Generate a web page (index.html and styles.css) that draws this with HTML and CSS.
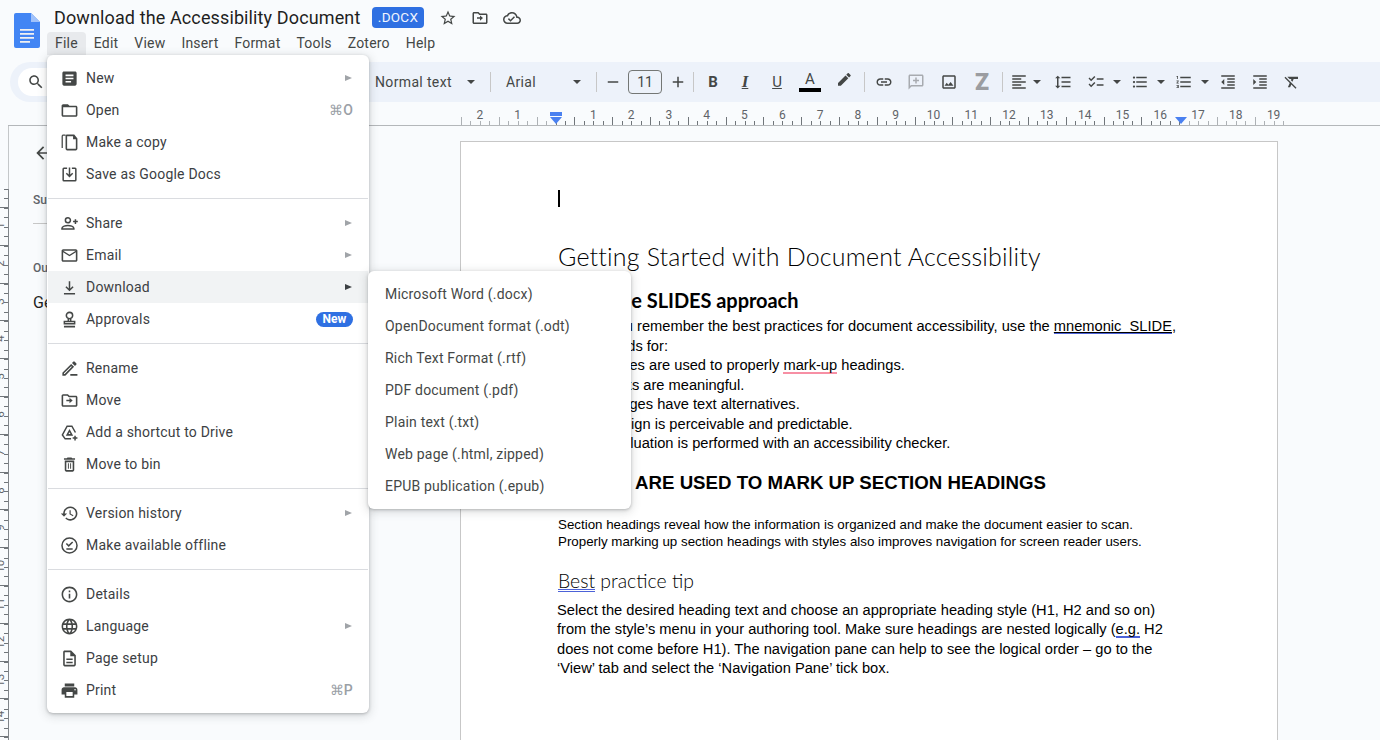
FILE: index.html
```html
<!DOCTYPE html>
<html lang="en">
<head>
    <meta charset="UTF-8">
    <title>Download the Accessibility Document</title>
    <link rel="stylesheet" href="styles.css">
</head>
<body>
    <header class="top-bar">
        <svg class="docs-logo" viewBox="0 0 26 35">
            <path fill="#4285f4" d="M2 0h15l9 9v24a2 2 0 0 1-2 2H2a2 2 0 0 1-2-2V2a2 2 0 0 1 2-2z"/>
            <path fill="#a1c2fa" d="M17 0l9 9h-9z"/>
            <path fill="#f1f1f1" d="M6 16h14v1.700H6zM6 20h14v1.700H6zM6 24h14v1.700H6zM6 28h10v1.700H6z"/>
        </svg>
        <div class="top-main">
            <div class="title-row">
                <span class="doc-title">Download the Accessibility Document</span>
                <span class="doc-badge">.DOCX</span>
                <svg class="title-icon star" viewBox="0 0 24 24"><path d="M22 9.240l-7.190-.62L12 2 9.190 8.630 2 9.240l5.460 4.730L5.820 21 12 17.270 18.180 21l-1.630-7.030L22 9.240zM12 15.400l-3.760 2.270 1-4.280-3.320-2.880 4.380-.38L12 6.100l1.710 4.040 4.380.38-3.320 2.880 1 4.280L12 15.400z"/></svg>
                <svg class="title-icon" viewBox="0 0 24 24"><path d="M20 6h-8l-2-2H4c-1.100 0-1.990.9-1.990 2L2 18c0 1.100.9 2 2 2h16c1.100 0 2-.9 2-2V8c0-1.100-.9-2-2-2zm0 12H4V6h5.170l2 2H20v10zm-8-5H8v-2h4V8.500l4 3.500-4 3.500z"/></svg>
                <svg class="title-icon" viewBox="0 0 24 24"><path d="M19.350 10.040C18.670 6.590 15.640 4 12 4 9.110 4 6.600 5.640 5.350 8.040 2.340 8.360 0 10.910 0 14c0 3.310 2.690 6 6 6h13c2.760 0 5-2.240 5-5 0-2.640-2.050-4.780-4.650-4.960zM19 18H6c-2.210 0-4-1.790-4-4 0-2.050 1.530-3.760 3.560-3.970l1.070-.11.5-.95C8.080 7.140 9.940 6 12 6c2.620 0 4.880 1.860 5.390 4.430l.3 1.500 1.530.11c1.560.1 2.780 1.410 2.780 2.960 0 1.650-1.350 3-3 3zm-9-3.820l-2.090-2.090L6.500 13.500 10 17l6-6-1.410-1.410z"/></svg>
            </div>
            <nav class="menu-bar">
                <span class="menu-item active">File</span>
                <span class="menu-item">Edit</span>
                <span class="menu-item">View</span>
                <span class="menu-item">Insert</span>
                <span class="menu-item">Format</span>
                <span class="menu-item">Tools</span>
                <span class="menu-item">Zotero</span>
                <span class="menu-item">Help</span>
            </nav>
        </div>
    </header>

    <div class="toolbar">
        <div class="search-pill">
            <svg class="tb-icon" viewBox="0 0 24 24"><path d="M15.500 14h-.79l-.28-.27C15.410 12.590 16 11.110 16 9.500 16 5.910 13.090 3 9.500 3S3 5.910 3 9.500 5.910 16 9.500 16c1.610 0 3.090-.59 4.230-1.570l.27.28v.79l5 4.990L20.490 19l-4.990-5zm-6 0C7.010 14 5 11.990 5 9.500S7.010 5 9.500 5 14 7.010 14 9.500 11.990 14 9.500 14z"/></svg>
        </div>
        <div class="select style-select"><span>Normal text</span><i class="caret"></i></div>
        <span class="tb-sep sep-select"></span>
        <div class="select font-select"><span>Arial</span><i class="caret"></i></div>
        <span class="tb-sep sep-select"></span>
        <div class="tool narrow"><svg class="tb-icon" viewBox="0 0 24 24"><path d="M5 11h14v2H5z"/></svg></div>
        <div class="size-box">11</div>
        <div class="tool narrow"><svg class="tb-icon" viewBox="0 0 24 24"><path d="M19 13h-6v6h-2v-6H5v-2h6V5h2v6h6z"/></svg></div>
        <span class="tb-sep"></span>
        <div class="tool first-after-sep fmt fmt-b">B</div>
        <div class="tool fmt fmt-i">I</div>
        <div class="tool fmt fmt-u">U</div>
        <div class="tool fmt fmt-a gap-1">A<i class="color-bar"></i></div>
        <div class="tool gap-2"><svg class="tb-icon" viewBox="0 0 24 24"><path d="M17.750 7 14 3.250l-10 10V17h3.750l10-10zm2.960-2.960c.39-.39.39-1.020 0-1.410L18.370.29c-.39-.39-1.020-.39-1.410 0L15 2.250 18.750 6l1.960-1.960z"/></svg></div>
        <span class="tb-sep sep-pen"></span>
        <div class="tool first-after-sep"><svg class="tb-icon" viewBox="0 0 24 24"><path d="M3.900 12c0-1.710 1.390-3.100 3.100-3.100h4V7H7c-2.760 0-5 2.240-5 5s2.240 5 5 5h4v-1.900H7c-1.710 0-3.100-1.390-3.100-3.100zM8 13h8v-2H8v2zm9-6h-4v1.900h4c1.710 0 3.100 1.390 3.100 3.100s-1.390 3.100-3.100 3.100h-4V17h4c2.760 0 5-2.240 5-5s-2.240-5-5-5z"/></svg></div>
        <div class="tool"><svg class="tb-icon muted" viewBox="0 0 24 24"><path d="M20 2H4c-1.100 0-2 .9-2 2v18l4-4h14c1.100 0 2-.9 2-2V4c0-1.100-.9-2-2-2zm0 14H5.170L4 17.170V4h16v12zm-9-2h2v-3h3V9h-3V6h-2v3H8v2h3z"/></svg></div>
        <div class="tool gap-1"><svg class="tb-icon" viewBox="0 0 24 24"><path d="M19 5v14H5V5h14m0-2H5c-1.100 0-2 .9-2 2v14c0 1.100.9 2 2 2h14c1.100 0 2-.9 2-2V5c0-1.100-.9-2-2-2zm-4.860 8.860l-3 3.870L9 13.140 6 17h12l-3.860-5.140z"/></svg></div>
        <div class="tool gap-1 fmt fmt-z">Z</div>
        <span class="tb-sep sep-z"></span>
        <div class="combo tight"><svg class="tb-icon" viewBox="0 0 24 24"><path d="M15 15H3v2h12v-2zm0-8H3v2h12V7zM3 13h18v-2H3v2zm0 8h18v-2H3v2zM3 3v2h18V3H3z"/></svg><i class="caret"></i></div>
        <div class="tool"><svg class="tb-icon" viewBox="0 0 24 24"><path d="M6 7h2.500L5 3.500 1.500 7H4v10H1.500L5 20.500 8.500 17H6V7zm4-2v2h12V5H10zm0 14h12v-2H10v2zm0-6h12v-2H10v2z"/></svg></div>
        <div class="combo gap-1"><svg class="tb-icon" viewBox="0 0 24 24"><path d="M22 7h-9v2h9V7zm0 8h-9v2h9v-2zM5.540 11 2 7.460l1.410-1.410 2.120 2.120 4.240-4.240 1.410 1.410L5.540 11zm0 8L2 15.460l1.410-1.410 2.120 2.120 4.240-4.240 1.410 1.410L5.540 19z"/></svg><i class="caret"></i></div>
        <div class="combo"><svg class="tb-icon" viewBox="0 0 24 24"><path d="M4 10.500c-.83 0-1.500.67-1.500 1.500s.67 1.500 1.500 1.500 1.500-.67 1.500-1.500-.67-1.500-1.500-1.500zm0-6c-.83 0-1.500.67-1.500 1.500S3.170 7.500 4 7.500 5.500 6.830 5.500 6 4.830 4.500 4 4.500zm0 12c-.83 0-1.500.68-1.500 1.500s.68 1.500 1.500 1.500 1.500-.68 1.500-1.500-.67-1.500-1.500-1.500zM7 19h14v-2H7v2zm0-6h14v-2H7v2zm0-8v2h14V5H7z"/></svg><i class="caret"></i></div>
        <div class="combo"><svg class="tb-icon" viewBox="0 0 24 24"><path d="M2 17h2v.5H3v1h1v.5H2v1h3v-4H2v1zm1-9h1V4H2v1h1v3zm-1 3h1.800L2 13.100v.9h3v-1H3.200L5 10.900V10H2v1zm5-6v2h14V5H7zm0 14h14v-2H7v2zm0-6h14v-2H7v2z"/></svg><i class="caret"></i></div>
        <div class="tool"><svg class="tb-icon" viewBox="0 0 24 24"><path d="M11 17h10v-2H11v2zm-8-5l4 4V8l-4 4zm0 9h18v-2H3v2zM3 3v2h18V3H3zm8 6h10V7H11v2zm0 4h10v-2H11v2z"/></svg></div>
        <div class="tool"><svg class="tb-icon" viewBox="0 0 24 24"><path d="M3 21h18v-2H3v2zM3 8v8l4-4-4-4zm8 9h10v-2H11v2zM3 3v2h18V3H3zm8 6h10V7H11v2zm0 4h10v-2H11v2z"/></svg></div>
        <div class="tool"><svg class="tb-icon" viewBox="0 0 24 24"><path d="M3.270 5L2 6.270l6.970 6.970L6.500 19h3l1.570-3.660L16.730 21 18 19.730 3.550 5.270 3.270 5zM6 5v.18L8.820 8h2.400l-.72 1.680 2.100 2.100L14.210 8H20V5H6z"/></svg></div>
    </div>

    <div class="ruler">
        <div class="ruler-scale">
            <span>2</span><span>1</span><span></span><span>1</span><span>2</span><span>3</span><span>4</span><span>5</span><span>6</span><span>7</span><span>8</span><span>9</span><span>10</span><span>11</span><span>12</span><span>13</span><span>14</span><span>15</span><span>16</span><span>17</span><span>18</span><span>19</span>
            <i class="shade shade-left"></i>
            <i class="shade shade-right"></i>
            <i class="indent-bar"></i>
            <i class="marker marker-left"></i>
            <i class="marker marker-right"></i>
        </div>
    </div>

    <main class="workspace">
        <div class="v-ruler">
            <div class="v-scale">
                <span>1</span><span>2</span><span>3</span><span>4</span><span>5</span><span>6</span><span>7</span><span>8</span><span>9</span><span>10</span><span>11</span><span>12</span><span>13</span><span>14</span>
            </div>
        </div>
        <aside class="outline-pane">
            <svg class="back-arrow" viewBox="0 0 24 24"><path d="M20 11H7.830l5.590-5.590L12 4l-8 8 8 8 1.410-1.410L7.830 13H20v-2z"/></svg>
            <div class="pane-label">Summary</div>
            <div class="pane-rule"></div>
            <div class="pane-label outline-label">Outline</div>
            <div class="pane-entry">Getting Started with Document Accessibility</div>
        </aside>
        <article class="page">
            <div class="cursor"></div>
            <h1 class="doc-h1">Getting Started with Document Accessibility</h1>
            <h2 class="doc-h2">Using the SLIDES approach</h2>
            <p class="doc-p">To help you remember the best practices for document accessibility, use the <span class="spell-blue linked">mnemonic&nbsp; SLIDE</span>,</p>
            <p class="doc-p">which stands for:</p>
            <p class="doc-p slide-line">Styles are used to properly <span class="spell-red">mark-up</span> headings.</p>
            <p class="doc-p slide-line">Links are meaningful.</p>
            <p class="doc-p slide-line">Images have text alternatives.</p>
            <p class="doc-p slide-line">Design is perceivable and predictable.</p>
            <p class="doc-p slide-line">Evaluation is performed with an accessibility checker.</p>
            <h3 class="doc-h3">STYLES ARE USED TO MARK UP SECTION HEADINGS</h3>
            <p class="doc-small">Section headings reveal how the information is organized and make the document easier to scan.</p>
            <p class="doc-small">Properly marking up section headings with styles also improves navigation for screen reader users.</p>
            <h4 class="doc-h4"><span class="double-blue">Best</span> practice tip</h4>
            <p class="doc-p tip">Select the desired heading text and choose an appropriate heading style (H1, H2 and so on)</p>
            <p class="doc-p tip">from the style’s menu in your authoring tool. Make sure headings are nested logically (<span class="spell-blue">e.g.</span> H2</p>
            <p class="doc-p tip">does not come before H1). The navigation pane can help to see the logical order – go to the</p>
            <p class="doc-p tip">‘View’ tab and select the ‘Navigation Pane’ tick box.</p>
        </article>
    </main>

    <!-- File menu -->
    <div class="file-menu">
        <div class="row"><svg class="row-icon" viewBox="0 0 24 24"><path d="M19 3H5c-1.100 0-2 .9-2 2v14c0 1.100.9 2 2 2h14c1.100 0 2-.9 2-2V5c0-1.100-.9-2-2-2zm-5 14H7v-2h7v2zm3-4H7v-2h10v2zm0-4H7V7h10v2z"/></svg><span class="row-text">New</span><i class="arrow"></i></div>
        <div class="row"><svg class="row-icon" viewBox="0 0 24 24"><path d="M20 6h-8l-2-2H4c-1.100 0-1.990.9-1.990 2L2 18c0 1.100.9 2 2 2h16c1.100 0 2-.9 2-2V8c0-1.100-.9-2-2-2zm0 12H4V8h16v10z"/></svg><span class="row-text">Open</span><span class="shortcut">⌘O</span></div>
        <div class="row"><svg class="row-icon" viewBox="0 0 24 24"><path d="M16 1H4c-.6 0-2 .9-2 2v15h1.600V3c0-.2.2-.4.4-.4h3V1zM18 1H9c-1.100 0-2 .9-2 2v16c0 1.100.9 2 2 2h11c1.100 0 2-.9 2-2V6l-4-5zm2 18H9V3h7.500v4H20v12z" transform="translate(0 1)"/></svg><span class="row-text">Make a copy</span></div>
        <div class="row"><svg class="row-icon stroke" viewBox="0 0 24 24"><path d="M9 4H5a1 1 0 0 0-1 1v14a1 1 0 0 0 1 1h14a1 1 0 0 0 1-1V5a1 1 0 0 0-1-1h-4M12 3v11M8 10.500l4 4 4-4"/></svg><span class="row-text">Save as Google Docs</span></div>
        <div class="divider"></div>
        <div class="row"><svg class="row-icon stroke" viewBox="0 0 24 24"><circle cx="10" cy="8" r="3.200"/><path d="M2.500 19v-1c0-2.400 4.600-3.600 7.500-3.600s7.500 1.200 7.500 3.600v1zM19.500 6.500v6M16.500 9.500h6"/></svg><span class="row-text">Share</span><i class="arrow"></i></div>
        <div class="row"><svg class="row-icon" viewBox="0 0 24 24"><path d="M20 4H4c-1.100 0-1.990.9-1.990 2L2 18c0 1.100.9 2 2 2h16c1.100 0 2-.9 2-2V6c0-1.100-.9-2-2-2zm0 14H4V8l8 5 8-5v10zm-8-7L4 6h16l-8 5z"/></svg><span class="row-text">Email</span><i class="arrow"></i></div>
        <div class="row hovered"><svg class="row-icon stroke" viewBox="0 0 24 24"><path d="M12 4v11M7.500 11l4.500 4.500 4.500-4.500M5 20h14"/></svg><span class="row-text">Download</span><i class="arrow dark"></i></div>
        <div class="row"><svg class="row-icon stroke" viewBox="0 0 24 24"><circle cx="12" cy="7" r="4"/><path d="M10.500 11v3M13.500 11v3M5.500 14.500h13v3h-13zM5 21h14"/></svg><span class="row-text">Approvals</span><span class="new-badge">New</span></div>
        <div class="divider"></div>
        <div class="row"><svg class="row-icon" viewBox="0 0 24 24"><path d="M14.060 9.020l.92.92L5.920 19H5v-.92l9.060-9.060M17.660 3c-.25 0-.51.1-.7.29l-1.830 1.830 3.750 3.750 1.830-1.830c.39-.39.39-1.020 0-1.410l-2.340-2.340c-.2-.2-.45-.29-.71-.29zm-3.600 3.190L3 17.250V21h3.750L17.810 9.940l-3.750-3.750zM13 19h9v2h-9z"/></svg><span class="row-text">Rename</span></div>
        <div class="row"><svg class="row-icon" viewBox="0 0 24 24"><path d="M20 6h-8l-2-2H4c-1.100 0-1.990.9-1.990 2L2 18c0 1.100.9 2 2 2h16c1.100 0 2-.9 2-2V8c0-1.100-.9-2-2-2zm0 12H4V6h5.170l2 2H20v10zm-8-5H8v-2h4V8.500l4 3.500-4 3.500z"/></svg><span class="row-text">Move</span></div>
        <div class="row"><svg class="row-icon stroke" viewBox="0 0 24 24"><path d="M14 20H6.500L3 15 9 4h6l4.500 8M9 15h6l-3-5.500zM19 16v6M16 19h6"/></svg><span class="row-text">Add a shortcut to Drive</span></div>
        <div class="row"><svg class="row-icon" viewBox="0 0 24 24"><path d="M6 19c0 1.100.9 2 2 2h8c1.100 0 2-.9 2-2V7H6v12zM8 9h8v10H8V9zm2 1.500h1.200v7H10zm2.800 0H14v7h-1.200zM15.500 4l-1-1h-5l-1 1H5v2h14V4h-3.500z"/></svg><span class="row-text">Move to bin</span></div>
        <div class="divider"></div>
        <div class="row"><svg class="row-icon" viewBox="0 0 24 24"><path d="M13 3c-4.970 0-9 4.030-9 9H1l3.890 3.890.07.14L9 12H6c0-3.870 3.130-7 7-7s7 3.130 7 7-3.130 7-7 7c-1.930 0-3.680-.79-4.940-2.060l-1.420 1.420C8.270 19.990 10.510 21 13 21c4.970 0 9-4.030 9-9s-4.030-9-9-9zm-1 5v5l4.280 2.540.72-1.210-3.500-2.080V8H12z"/></svg><span class="row-text">Version history</span><i class="arrow"></i></div>
        <div class="row"><svg class="row-icon stroke" viewBox="0 0 24 24"><circle cx="12" cy="12" r="9.500"/><path d="M8 9.500l3 3 5-5M8 16.500h8"/></svg><span class="row-text">Make available offline</span></div>
        <div class="divider"></div>
        <div class="row"><svg class="row-icon" viewBox="0 0 24 24"><path d="M11 7h2v2h-2zm0 4h2v6h-2zm1-9C6.480 2 2 6.480 2 12s4.480 10 10 10 10-4.480 10-10S17.520 2 12 2zm0 18c-4.410 0-8-3.590-8-8s3.590-8 8-8 8 3.590 8 8-3.590 8-8 8z"/></svg><span class="row-text">Details</span></div>
        <div class="row"><svg class="row-icon" viewBox="0 0 24 24"><path d="M11.990 2C6.470 2 2 6.480 2 12s4.470 10 9.990 10C17.520 22 22 17.520 22 12S17.520 2 11.990 2zm6.930 6h-2.950c-.32-1.250-.78-2.450-1.380-3.560 1.840.63 3.370 1.910 4.330 3.560zM12 4.040c.83 1.200 1.480 2.530 1.910 3.960h-3.820c.43-1.430 1.080-2.760 1.910-3.960zM4.260 14C4.100 13.360 4 12.690 4 12s.1-1.360.26-2h3.380c-.08.66-.14 1.320-.14 2 0 .68.06 1.340.14 2H4.260zm.82 2h2.950c.32 1.250.78 2.450 1.380 3.560-1.840-.63-3.370-1.900-4.330-3.560zm2.950-8H5.080c.96-1.660 2.490-2.930 4.330-3.560C8.810 5.550 8.350 6.750 8.030 8zM12 19.960c-.83-1.200-1.480-2.530-1.910-3.960h3.820c-.43 1.430-1.080 2.760-1.910 3.960zM14.340 14H9.660c-.09-.66-.16-1.320-.16-2 0-.68.07-1.350.16-2h4.680c.09.65.16 1.320.16 2 0 .68-.07 1.340-.16 2zm.25 5.560c.6-1.110 1.060-2.310 1.380-3.560h2.950c-.96 1.650-2.490 2.930-4.330 3.560zM16.360 14c.08-.66.14-1.320.14-2 0-.68-.06-1.340-.14-2h3.380c.16.64.26 1.310.26 2s-.1 1.360-.26 2h-3.380z"/></svg><span class="row-text">Language</span><i class="arrow"></i></div>
        <div class="row"><svg class="row-icon" viewBox="0 0 24 24"><path d="M8 16h8v2H8zm0-4h8v2H8zm6-10H6c-1.100 0-2 .9-2 2v16c0 1.100.89 2 1.990 2H18c1.100 0 2-.9 2-2V8l-6-6zm4 18H6V4h7v5h5v11z"/></svg><span class="row-text">Page setup</span></div>
        <div class="row"><svg class="row-icon" viewBox="0 0 24 24"><path d="M19 8H5c-1.660 0-3 1.340-3 3v6h4v4h12v-4h4v-6c0-1.660-1.340-3-3-3zm-3 11H8v-5h8v5zm3-7c-.55 0-1-.45-1-1s.45-1 1-1 1 .45 1 1-.45 1-1 1zm-1-9H6v4h12V3z"/></svg><span class="row-text">Print</span><span class="shortcut">⌘P</span></div>
    </div>

    <!-- Download submenu -->
    <div class="sub-menu">
        <div class="sub-row">Microsoft Word (.docx)</div>
        <div class="sub-row">OpenDocument format (.odt)</div>
        <div class="sub-row">Rich Text Format (.rtf)</div>
        <div class="sub-row">PDF document (.pdf)</div>
        <div class="sub-row">Plain text (.txt)</div>
        <div class="sub-row">Web page (.html, zipped)</div>
        <div class="sub-row">EPUB publication (.epub)</div>
    </div>
</body>
</html>
```

FILE: styles.css
```css
* {
    margin: 0;
    padding: 0;
    box-sizing: border-box;
}

html, body {
    height: 740px;
    overflow: hidden;
}

body {
    position: relative;
    background: #f9fbfd;
    color: #444746;
    font-family: Roboto, 'Noto Sans', sans-serif;
    font-size: 14px;
}

/* top bar */
.top-bar {
    display: flex;
    height: 62px;
}

.docs-logo {
    width: 26px;
    height: 35px;
    margin: 13px 0 0 14px;
    flex: none;
}

.top-main {
    margin-left: 7px;
}

.title-row {
    display: flex;
    align-items: center;
    height: 25px;
    margin-top: 7px;
    padding: 0 0 4px 7px;
}

.doc-title {
    font-size: 18px;
    letter-spacing: 0.12px;
    color: #1f1f1f;
    width: 318px;
    white-space: nowrap;
}

.doc-badge {
    width: 52px;
    height: 21px;
    background: #2f70e2;
    color: #f1f5fe;
    border-radius: 4px;
    font-size: 13.5px;
    line-height: 21px;
    text-align: center;
    letter-spacing: 0.3px;
}

.title-icon {
    width: 18px;
    height: 18px;
    margin-left: 14px;
    fill: #444746;
}

.title-icon.star {
    margin-left: 15px;
}

.menu-bar {
    display: flex;
    height: 23px;
}

.menu-item {
    padding: 0 8px;
    line-height: 23px;
    border-radius: 4px 4px 0 0;
    letter-spacing: 0.2px;
}

.menu-item.active {
    background: #e8eaed;
}

/* toolbar */
.toolbar {
    display: flex;
    align-items: center;
    height: 40px;
    margin-left: 10px;
    width: 1400px;
    background: #edf2fa;
    border-radius: 20px;
    color: #444746;
}

.search-pill {
    display: flex;
    align-items: center;
    width: 320px;
    height: 28px;
    margin-left: 8px;
    padding-left: 9px;
    background: #fff;
    border-radius: 14px;
    flex: none;
}

.tb-icon {
    width: 18px;
    height: 18px;
    fill: #444746;
    flex: none;
}

.tb-icon.muted {
    fill: #a8abb0;
}

.select {
    display: flex;
    align-items: center;
    justify-content: space-between;
    letter-spacing: 0.35px;
    flex: none;
}

.style-select {
    width: 100px;
    margin-left: 37px;
}

.font-select {
    width: 75px;
    margin-left: 15px;
}

.caret {
    width: 0;
    height: 0;
    flex: none;
    border-left: 4px solid transparent;
    border-right: 4px solid transparent;
    border-top: 4px solid #444746;
}

.tb-sep {
    width: 1px;
    height: 20px;
    background: #c7c7c7;
    flex: none;
}

.sep-select {
    margin-left: 15px;
}

.sep-pen {
    margin-left: 4px;
}

.sep-z {
    margin-left: 4px;
}

.tool {
    display: flex;
    align-items: center;
    justify-content: center;
    position: relative;
    width: 32px;
    height: 28px;
    flex: none;
}

.tool.narrow {
    width: 31px;
}

.gap-1 {
    margin-left: 1px;
}

.gap-2 {
    margin-left: 2px;
}

.first-after-sep {
    margin-left: 3px;
}

.size-box {
    width: 34px;
    height: 24px;
    border: 1px solid #747775;
    border-radius: 4px;
    text-align: center;
    line-height: 22px;
    flex: none;
}

.fmt {
    font-size: 15px;
}

.fmt-b {
    font-weight: 700;
}

.fmt-i {
    font-family: 'Liberation Serif', serif;
    font-style: italic;
    font-weight: 700;
    font-size: 17px;
    text-decoration: underline;
}

.fmt-u {
    text-decoration: underline;
}

.fmt-a {
    align-items: flex-start;
    line-height: 22px;
}

.color-bar {
    position: absolute;
    left: 5px;
    bottom: 4px;
    width: 22px;
    height: 4px;
    background: #000;
}

.fmt-z {
    font-size: 23px;
    font-weight: 900;
    color: #9b9da1;
}

.combo {
    display: flex;
    align-items: center;
    width: 44px;
    padding-left: 7px;
    flex: none;
}

.combo .caret {
    margin-left: 8px;
}

.combo.tight .caret {
    margin-left: 5px;
}

/* ruler */
.ruler {
    height: 24px;
    padding-left: 452px;
    margin-left: 8px;
    border-bottom: 1px solid #b4b7ba;
}

.ruler-scale {
    display: flex;
    position: relative;
    width: 832px;
    height: 23px;
    padding-top: 5px;
    font-size: 12px;
    color: #5f6368;
    background:
        repeating-linear-gradient(to right, #70757a 0 1px, transparent 1px 37.8px) 1px 100% / 100% 8px no-repeat,
        repeating-linear-gradient(to right, #70757a 0 1px, transparent 1px 9.45px) 1px 100% / 100% 4px no-repeat;
}

.ruler-scale span {
    width: 37.8px;
    text-align: center;
    line-height: 16px;
    flex: none;
    position: relative;
    left: 1px;
    z-index: 2;
}

.shade {
    position: absolute;
    top: 0;
    bottom: 0;
    background: rgba(249, 251, 253, 0.45);
}

.shade-left {
    left: 0;
    width: 96px;
}

.shade-right {
    left: 721px;
    right: 0;
}

.marker {
    position: absolute;
    top: 15px;
    border-left: 6px solid transparent;
    border-right: 6px solid transparent;
    border-top: 7px solid #4a80f0;
    z-index: 3;
}

.marker-left {
    left: 90px;
}

.marker-right {
    left: 715px;
}

.indent-bar {
    position: absolute;
    left: 90px;
    top: 10px;
    width: 12px;
    height: 4px;
    background: #4a80f0;
    z-index: 3;
}

/* work area */
.workspace {
    display: flex;
    height: 614px;
    overflow: hidden;
}

.v-ruler {
    width: 9px;
    height: 100%;
    overflow: hidden;
    flex: none;
    background:
        linear-gradient(to bottom, #c4c7c9 0 63px, #80858a 63px) 8px 0 / 1px 100% no-repeat,
        repeating-linear-gradient(to bottom, #70757a 0 1px, transparent 1px 37.8px) 0 81px / 8px 100% no-repeat,
        repeating-linear-gradient(to bottom, #70757a 0 1px, transparent 1px 9.45px) 4px 63px / 4px 100% no-repeat;
}

.v-scale {
    margin-top: 81px;
    margin-left: -6px;
    font-size: 11.5px;
    color: #5f6368;
}

.v-scale span {
    display: flex;
    align-items: center;
    justify-content: center;
    height: 37.8px;
    width: 12px;
    writing-mode: vertical-rl;
    transform: rotate(180deg);
}

.outline-pane {
    width: 451px;
    flex: none;
    padding: 15px 0 0 24px;
    font-size: 12px;
}

.back-arrow {
    display: block;
    width: 20px;
    height: 24px;
    fill: #444746;
}

.pane-label {
    margin-top: 27px;
    font-weight: 500;
    color: #5f6368;
    line-height: 16px;
}

.pane-rule {
    height: 1px;
    margin-top: 15px;
    width: 300px;
    background: #c7c7c7;
}

.outline-label {
    margin-top: 36px;
}

.pane-entry {
    margin-top: 18px;
    font-size: 16px;
    line-height: 18px;
    color: #1f1f1f;
    white-space: nowrap;
}

/* the page */
.page {
    width: 818px;
    height: 640px;
    margin-top: 15px;
    padding: 48px 0 0 96px;
    background: #fff;
    border: 1px solid #c7c7c7;
    color: #000;
    font-family: 'Liberation Sans', Arial, sans-serif;
    flex: none;
}

.cursor {
    width: 2px;
    height: 17px;
    margin-left: 1px;
    background: #000;
}

.doc-h1 {
    margin: 33px 0 0 1px;
    font-family: Lato, sans-serif;
    font-weight: 300;
    font-size: 25px;
    letter-spacing: 0.18px;
    line-height: 32px;
    white-space: nowrap;
}

.doc-h2 {
    margin: 15px 0 4px 1px;
    font-family: Lato, sans-serif;
    font-weight: 700;
    font-size: 20px;
    letter-spacing: -0.05px;
    line-height: 26px;
    white-space: nowrap;
}

.doc-p {
    font-size: 14.67px;
    line-height: 19.5px;
    margin-left: 1px;
    white-space: nowrap;
}

.slide-line {
    padding-left: 47px;
}

.spell-blue {
    border-bottom: 1px solid #4c62d8;
    box-shadow: 0 1px 0 #4c62d8;
    line-height: 14px;
    display: inline-block;
}

.spell-blue.linked {
    text-decoration: underline;
    box-shadow: none;
}

.spell-red {
    border-bottom: 2px solid #f78fa4;
    display: inline-block;
    line-height: 14px;
}

.doc-h3 {
    margin: 17px 0 0 1px;
    font-size: 18.67px;
    font-weight: 700;
    line-height: 24px;
    white-space: nowrap;
}

.doc-small {
    font-size: 13.33px;
    line-height: 17px;
    margin-left: 1px;
    white-space: nowrap;
}

.doc-h3 + .doc-small {
    margin-top: 21px;
}

.doc-h4 {
    margin: 19px 0 0 1px;
    font-family: Lato, sans-serif;
    font-weight: 300;
    font-size: 19.4px;
    line-height: 24px;
    white-space: nowrap;
}

.double-blue {
    border-bottom: 3px double #4c62d8;
    display: inline-block;
    line-height: 16px;
}

.doc-p.tip {
    margin-left: 0;
}

.doc-h4 + .doc-p.tip {
    margin-top: 8px;
}

/* menus */
.file-menu, .sub-menu {
    position: absolute;
    background: #fff;
    border-radius: 6px;
    box-shadow: 0 1px 3px rgba(60, 64, 67, 0.3), 0 2px 8px 2px rgba(60, 64, 67, 0.15);
}

.file-menu {
    left: 47px;
    top: 55px;
    width: 322px;
    padding: 7px 1px;
}

.sub-menu {
    left: 368px;
    top: 271px;
    width: 263px;
    padding: 7px 0;
}

.row {
    display: flex;
    align-items: center;
    height: 32px;
    padding: 0 15px 0 12px;
    color: #3c4043;
}

.row.hovered {
    background: #f1f3f4;
}

.row-icon {
    width: 19px;
    height: 19px;
    fill: #444746;
    flex: none;
}

.row-icon.stroke {
    fill: none;
    stroke: #444746;
    stroke-width: 1.9;
}

.row-text {
    margin-left: 7px;
    flex: 1;
    letter-spacing: 0.2px;
    color: #3c4043;
}

.arrow {
    width: 0;
    height: 0;
    margin-right: 1px;
    border-top: 3.5px solid transparent;
    border-bottom: 3.5px solid transparent;
    border-left: 7px solid #a0a4a8;
}

.arrow.dark {
    border-left-color: #3c4043;
}

.shortcut {
    color: #9aa0a6;
    font-weight: 500;
    font-size: 14px;
    letter-spacing: 0.2px;
}

.new-badge {
    width: 37px;
    height: 15px;
    background: #2f70e2;
    color: #fff;
    border-radius: 8px;
    font-size: 12px;
    font-weight: 700;
    line-height: 15px;
    text-align: center;
}

.divider {
    height: 1px;
    margin: 8px 0;
    background: #dadce0;
}

.sub-row {
    height: 32px;
    line-height: 32px;
    padding-left: 17px;
    letter-spacing: 0.2px;
}
```
